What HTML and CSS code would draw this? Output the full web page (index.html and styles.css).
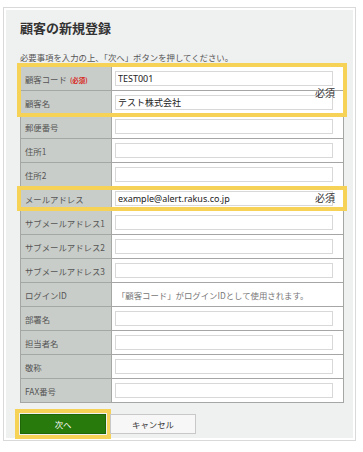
FILE: index.html
```html
<!DOCTYPE html>
<html lang="ja">
<head>
    <meta charset="UTF-8">
    <meta name="viewport" content="width=device-width, initial-scale=1.0">
    <title>顧客の新規登録</title>
    <link rel="stylesheet" href="styles.css">
</head>
<body>
    <div class="frame">
        <div class="panel">
            <h1 class="title">顧客の新規登録</h1>
            <p class="lead">必要事項を入力の上、「次へ」ボタンを押してください。</p>

            <!-- Form table -->
            <div class="form-wrap">
                <table class="form">
                    <tr>
                        <th>顧客コード<span class="req">(必須)</span></th>
                        <td><input class="field" type="text" value="TEST001"></td>
                    </tr>
                    <tr>
                        <th>顧客名</th>
                        <td><input class="field" type="text" value="テスト株式会社"></td>
                    </tr>
                    <tr>
                        <th>郵便番号</th>
                        <td><input class="field" type="text"></td>
                    </tr>
                    <tr>
                        <th>住所1</th>
                        <td><input class="field" type="text"></td>
                    </tr>
                    <tr>
                        <th>住所2</th>
                        <td><input class="field" type="text"></td>
                    </tr>
                    <tr>
                        <th>メールアドレス</th>
                        <td><input class="field" type="text" value="example@alert.rakus.co.jp"></td>
                    </tr>
                    <tr>
                        <th>サブメールアドレス1</th>
                        <td><input class="field" type="text"></td>
                    </tr>
                    <tr>
                        <th>サブメールアドレス2</th>
                        <td><input class="field" type="text"></td>
                    </tr>
                    <tr>
                        <th>サブメールアドレス3</th>
                        <td><input class="field" type="text"></td>
                    </tr>
                    <tr>
                        <th>ログインID</th>
                        <td class="note">「顧客コード」がログインIDとして使用されます。</td>
                    </tr>
                    <tr>
                        <th>部署名</th>
                        <td><input class="field" type="text"></td>
                    </tr>
                    <tr>
                        <th>担当者名</th>
                        <td><input class="field" type="text"></td>
                    </tr>
                    <tr>
                        <th>敬称</th>
                        <td><input class="field" type="text"></td>
                    </tr>
                    <tr>
                        <th>FAX番号</th>
                        <td><input class="field" type="text"></td>
                    </tr>
                </table>

                <!-- Highlights -->
                <div class="mark mark-code"></div>
                <div class="mark mark-mail"></div>
                <span class="must must-code">必須</span>
                <span class="must must-mail">必須</span>
            </div>

            <!-- Buttons -->
            <div class="actions">
                <button class="btn btn-next">次へ</button>
                <button class="btn btn-cancel">キャンセル</button>
            </div>
        </div>
    </div>
</body>
</html>
```

FILE: styles.css
```css
body {
    margin: 0;
    padding: 0;
    background-color: #fff;
    font-family: "Noto Sans CJK JP", "Noto Sans", sans-serif;
    color: #333;
}
.frame {
    margin: 7px 0 0 3px;
    width: 347px;
    border: 1px solid #d9d9d9;
    padding: 2px;
}
.panel {
    background-color: #eff0f0;
    padding: 10px 6px 4px 14px;
}
.title {
    margin: 0;
    font-size: 13px;
    line-height: 16px;
    font-weight: bold;
    color: #333;
}
.lead {
    margin: 15px 0 3px;
    font-size: 8.4px;
    line-height: 12px;
    color: #555;
}
/* Form table */
.form-wrap {
    position: relative;
}
.form {
    width: 324px;
    border-collapse: collapse;
    border: 1px solid #a5a7a5;
    background-color: #fff;
}
.form th,
.form td {
    height: 23px;
    padding: 0;
    border: 1px solid #a5a7a5;
    font-size: 8.4px;
    font-weight: normal;
    text-align: left;
    white-space: nowrap;
}
.form th {
    width: 86px;
    padding-left: 4px;
    background-color: #c9cdc9;
    color: #555;
}
.form td {
    padding-left: 3px;
}
.req {
    margin-left: 3px;
    font-size: 6.5px;
    font-weight: bold;
    color: #d8261c;
}
.field {
    display: block;
    box-sizing: border-box;
    width: 218px;
    height: 15px;
    margin: 0;
    padding: 0 2px;
    border: 1px solid #d8d8d8;
    background-color: #fff;
    font-family: "Noto Sans", "Noto Sans CJK JP", sans-serif;
    font-size: 9px;
    color: #222;
    outline: none;
}
.note {
    color: #777;
}
.form td.note {
    padding-left: 5px;
}
.mark {
    position: absolute;
    left: -3px;
    width: 330px;
    box-sizing: border-box;
    border: 4px solid #f6d257;
}
.mark-code {
    top: -3px;
    height: 54px;
}
.mark-mail {
    top: 120px;
    height: 25px;
}
.must {
    position: absolute;
    left: 295px;
    font-size: 10px;
    line-height: 12px;
    color: #333;
}
.must-code {
    top: 21px;
}
.must-mail {
    top: 126px;
}
/* Buttons */
.actions {
    display: flex;
    gap: 4px;
    margin-top: 11px;
}
.btn {
    width: 86px;
    height: 20px;
    padding: 0;
    font-family: "Noto Sans CJK JP", sans-serif;
    font-size: 8.4px;
    cursor: pointer;
}
.btn-next {
    background-color: #297a0c;
    color: #fff;
    border: 1px solid #1f6608;
    outline: 4px solid #f6d257;
    outline-offset: 1px;
}
.btn-cancel {
    background-color: #f7f7f7;
    color: #333;
    border: 1px solid #c8c8c8;
}
```
